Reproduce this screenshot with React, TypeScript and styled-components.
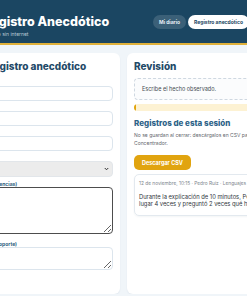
import styled, { createGlobalStyle } from 'styled-components';

const GlobalStyle = createGlobalStyle`
  html, body {
    margin: 0;
    padding: 0;
    overflow: hidden;
    background: #f0f5f9;
  }
  body {
    font-family: Inter, "Noto Sans", "Liberation Sans", sans-serif;
  }
  * { box-sizing: border-box; }
`;

const Page = styled.div`
  width: 360px;
  margin-left: -20px;
`;

const Header = styled.header`
  height: 45px;
  background: #1b4662;
  border-bottom: 2px solid #e0b13a;
  display: flex;
  align-items: flex-start;
  padding: 15px 0 0 3px;
`;

const Brand = styled.div`
  display: flex;
  flex-direction: column;
  gap: 2px;
  width: 170px;
`;

const Title = styled.h1`
  margin: 0;
  font-size: 12.5px;
  line-height: 14px;
  font-weight: 800;
  color: #fff;
  white-space: nowrap;
`;

const Tagline = styled.span`
  font-size: 5px;
  line-height: 6px;
  color: #b9cad6;
`;

const Nav = styled.nav`
  display: flex;
  gap: 2px;
`;

const NavPill = styled.span<{ $active?: boolean }>`
  height: 14px;
  padding: 0 6px;
  display: flex;
  align-items: center;
  border-radius: 7px;
  font-size: 5px;
  font-weight: 700;
  white-space: nowrap;
  background: ${(p) => (p.$active ? '#fff' : 'rgba(255,255,255,0.14)')};
  color: ${(p) => (p.$active ? '#1b4662' : '#e6eef4')};
`;

const Main = styled.main`
  display: grid;
  grid-template-columns: 140px 204px;
  gap: 7px;
  padding-top: 8px;
`;

const Card = styled.section<{ $bottom?: number }>`
  background: #fff;
  border-radius: 6px;
  padding: 7px 7px ${(p) => p.$bottom ?? 7}px;
  box-shadow: 0 1px 2px rgba(20, 50, 80, 0.06);
  display: flex;
  flex-direction: column;
`;

const CardTitle = styled.h2`
  margin: 0;
  font-size: 10px;
  line-height: 12px;
  font-weight: 800;
  color: #1f4a68;
  white-space: nowrap;
`;

const Form = styled.div`
  display: flex;
  flex-direction: column;
  gap: 4px;
  margin-top: 8px;
`;

const Label = styled.label`
  display: block;
  font-size: 5px;
  line-height: 6px;
  font-weight: 700;
  color: #2d5f80;
  white-space: nowrap;
`;

const Input = styled.input`
  display: block;
  width: 100%;
  height: 15px;
  border: 1px solid #dce5ed;
  border-radius: 4px;
  background: #fff;
  font: inherit;
  font-size: 6px;
  outline: none;
`;

const SelectWrap = styled.div`
  position: relative;
`;

const Select = styled.select`
  display: block;
  width: 100%;
  height: 16px;
  border: 1px solid #e2e6ea;
  border-radius: 4px;
  background: #ececec;
  appearance: none;
  font: inherit;
  font-size: 6px;
  color: #333;
  outline: none;
`;

const Chevron = styled.svg`
  position: absolute;
  right: 4px;
  top: 6px;
  width: 5px;
  height: 4px;
  pointer-events: none;
`;

const TextArea = styled.textarea<{ $h: number; $focus?: boolean }>`
  display: block;
  width: 100%;
  height: ${(p) => p.$h}px;
  border: ${(p) => (p.$focus ? '1.5px solid #4d4d4d' : '1px solid #dce5ed')};
  border-radius: 4px;
  font: inherit;
  font-size: 6px;
  outline: none;
  margin-bottom: 3px;
`;

const ReviewBox = styled.div`
  margin-top: 6px;
  height: 22px;
  border: 1px dashed #cfd8e1;
  border-radius: 4px;
  background: #fbfcfd;
  display: flex;
  align-items: center;
  padding: 0 7px;
  font-size: 5.5px;
  color: #454c52;
`;

const Progress = styled.div`
  margin-top: 4px;
  height: 7px;
  border-radius: 4px;
  background: #fdf2d3;
  overflow: hidden;
`;

const ProgressFill = styled.div`
  height: 100%;
  background: #e1a40f;
  border-radius: 4px;
`;

const SubTitle = styled.h3`
  margin: 7px 0 0;
  font-size: 8px;
  line-height: 10px;
  font-weight: 800;
  color: #2d6287;
`;

const Note = styled.p`
  margin: 4px 0 0;
  font-size: 5px;
  line-height: 7.5px;
  color: #5f666c;
`;

const Button = styled.button`
  margin-top: 8px;
  align-self: flex-start;
  height: 15px;
  padding: 0 8px;
  border: none;
  border-radius: 5px;
  background: #e1a40f;
  color: #fff;
  font: inherit;
  font-size: 5.5px;
  font-weight: 700;
`;

const Record = styled.article`
  margin-top: 4px;
  border: 1px solid #e3e9ef;
  border-radius: 5px;
  padding: 5px 4px 8px;
  box-shadow: 0 1px 2px rgba(20, 50, 80, 0.05);
`;

const Meta = styled.div`
  font-size: 4.8px;
  line-height: 7px;
  color: #7d858c;
`;

const RecordText = styled.p`
  margin: 6px 0 0;
  font-size: 5.8px;
  line-height: 7px;
  color: #30363b;
`;

export default function App() {
  const progress = 1;
  return (
    <>
      <GlobalStyle />
      <Page>
        <Header>
          <Brand>
            <Title>Registro Anecdótico</Title>
            <Tagline>Trabajo sin internet</Tagline>
          </Brand>
          <Nav>
            <NavPill>Mi diario</NavPill>
            <NavPill $active>Registro anecdótico</NavPill>
          </Nav>
        </Header>
        <Main>
          <Card $bottom={21}>
            <CardTitle>Registro anecdótico</CardTitle>
            <Form>
              <div>
                <Label>Día</Label>
                <Input type="text" />
              </div>
              <div>
                <Label>Hora</Label>
                <Input type="text" />
              </div>
              <div>
                <Label>Aula</Label>
                <Input type="text" />
              </div>
              <div>
                <Label>Tipo</Label>
                <SelectWrap>
                  <Select>
                    <option></option>
                  </Select>
                  <Chevron viewBox="0 0 10 8">
                    <path d="M1.5 2 L5 5.5 L8.5 2" stroke="#333" strokeWidth="2" fill="none" />
                  </Chevron>
                </SelectWrap>
              </div>
              <div>
                <Label>(evidencias)</Label>
                <TextArea $h={47} $focus />
              </div>
              <div>
                <Label>(de soporte)</Label>
                <TextArea $h={23} />
              </div>
            </Form>
          </Card>
          <Card>
            <CardTitle>Revisión</CardTitle>
            <ReviewBox>Escribe el hecho observado.</ReviewBox>
            <Progress>
              <ProgressFill style={{ width: `${progress}%` }} />
            </Progress>
            <SubTitle>Registros de esta sesión</SubTitle>
            <Note>
              No se guardan al cerrar: descárgalos en CSV para importarlos después en el
              Concentrador.
            </Note>
            <Button>Descargar CSV</Button>
            <Record>
              <Meta>12 de noviembre, 10:15 · Pedro Ruiz · Lenguajes y comunicación</Meta>
              <RecordText>
                Durante la explicación de 10 minutos, Pedro Ruiz se levantó de su
                lugar 4 veces y preguntó 2 veces qué había que hacer.
              </RecordText>
            </Record>
          </Card>
        </Main>
      </Page>
    </>
  );
}
